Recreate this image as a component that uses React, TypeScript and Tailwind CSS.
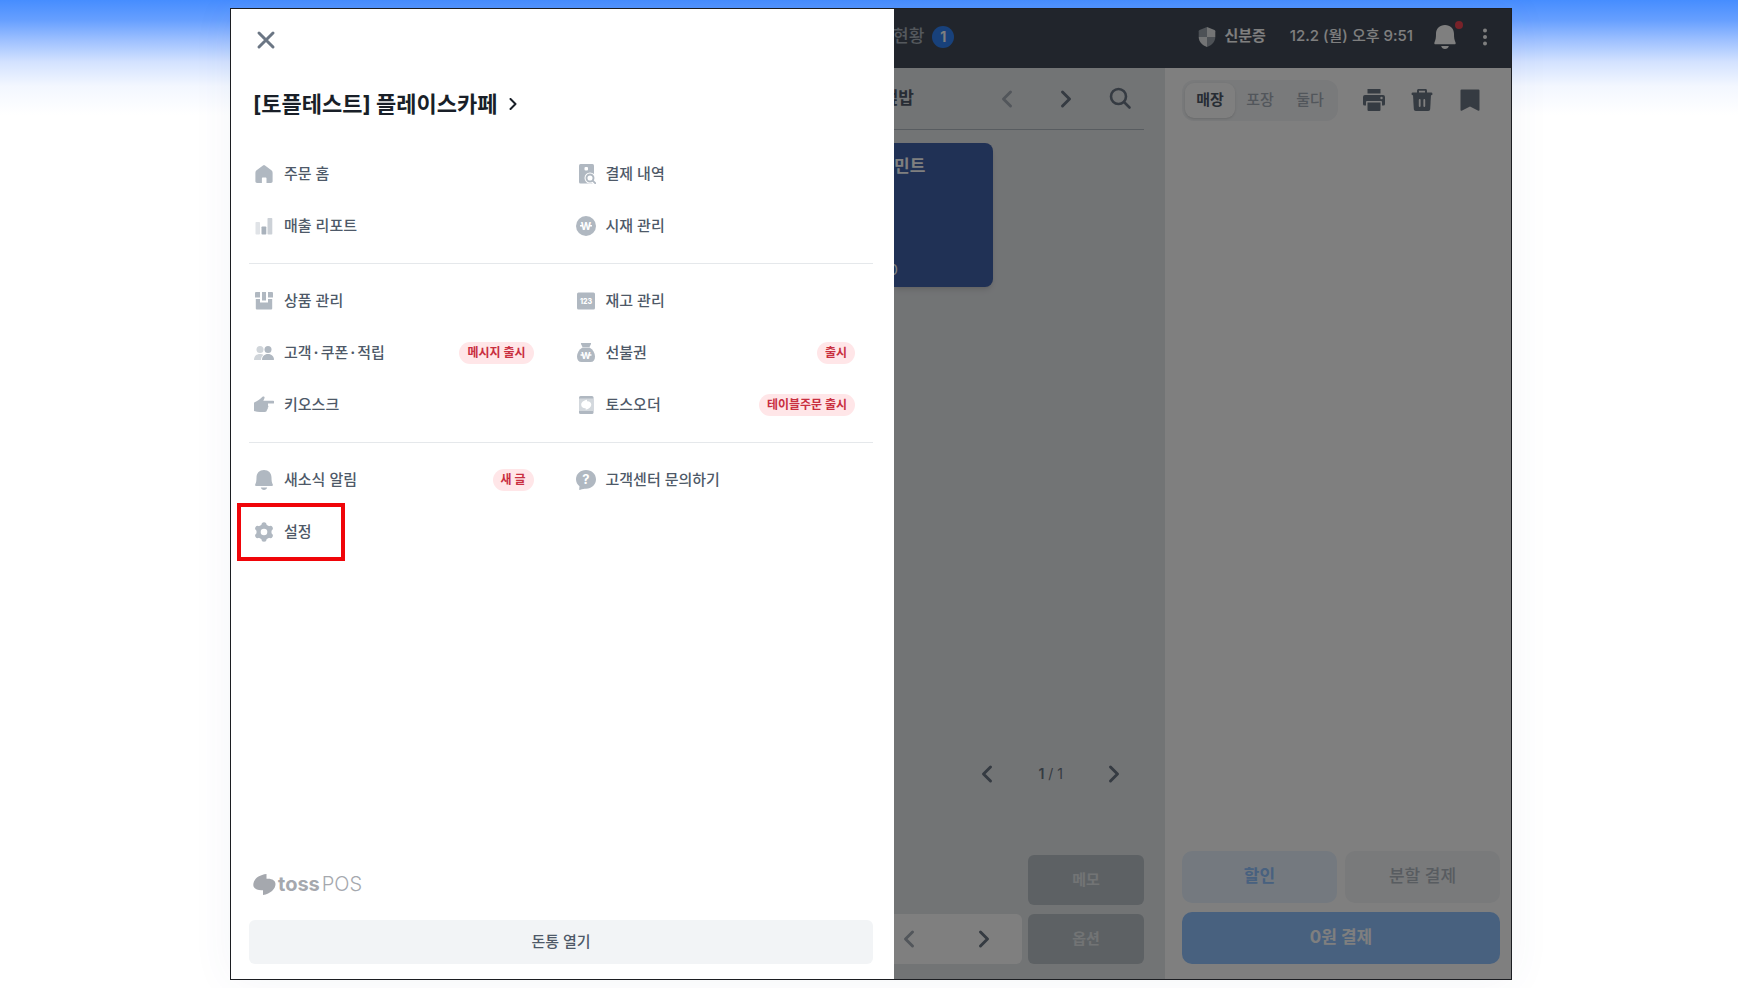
import React from 'react'

interface MenuItem {
  label: string
  icon: React.ReactNode
  badge?: string
  highlighted?: boolean
}

const HomeIcon = () => (
  <svg viewBox="0 0 20 20" className="size-5" fill="#b0b8c1">
    <path d="M9 1.4a1.6 1.6 0 0 1 2 0l6.4 4.9c.8.6 1.2 1.4 1.2 2.4v8.6c0 1-.7 1.7-1.7 1.7h-4.4v-4.6c0-.6-.4-1-1-1H8.900c-.6 0-1 .4-1 1V19H3.100c-1 0-1.700-.7-1.700-1.700V8.700c0-1 .4-1.800 1.200-2.400z" />
  </svg>
)

const ReportIcon = () => (
  <svg viewBox="0 0 20 20" className="size-5">
    <rect x="1.500" y="6" width="4.500" height="12.500" rx=".8" fill="#e0e3e7" />
    <rect x="7.500" y="10.500" width="4.800" height="8" rx=".8" fill="#a9b2bc" />
    <rect x="13.500" y="2" width="4.800" height="16.500" rx=".8" fill="#ccd1d7" />
  </svg>
)

const ReceiptIcon = () => (
  <svg viewBox="0 0 20 20" className="size-5">
    <rect x="3" y="0" width="15" height="19.500" rx="1.500" fill="#b0b8c1" />
    <rect x="8.500" y="3" width="3.500" height="3.500" rx="1" fill="#fff" />
    <circle cx="14" cy="14" r="5.500" fill="#fff" />
    <path d="m16 16 4 4" stroke="#fff" strokeWidth="4.500" />
    <circle cx="14" cy="14" r="3.500" fill="none" stroke="#b0b8c1" strokeWidth="1.900" />
    <path d="m16.700 16.700 2.500 2.500" stroke="#b0b8c1" strokeWidth="1.900" strokeLinecap="round" />
  </svg>
)

const WonIcon = () => (
  <svg viewBox="0 0 20 20" className="size-5">
    <circle cx="10" cy="10" r="10" fill="#b0b8c1" />
    <text x="10" y="13.500" textAnchor="middle" fontSize="10" fontWeight="700" fill="#fff">W</text>
    <path d="M4 9.700h3M13 9.700h3" stroke="#fff" strokeWidth="1.500" />
  </svg>
)

const BoxIcon = () => (
  <svg viewBox="0 0 20 20" className="size-5" fill="#b0b8c1">
    <path d="M2 1h4v5.500H1V2a1 1 0 0 1 1-1zM14 1h4a1 1 0 0 1 1 1v4.500h-5zM8 1h4v8.500H8z" />
    <path d="M1.800 8H6v3.500h8V8h4.200v9.500a1 1 0 0 1-1 1H2.800a1 1 0 0 1-1-1z" />
  </svg>
)

const StockIcon = () => (
  <svg viewBox="0 0 20 20" className="size-5">
    <rect x="1" y="1.500" width="18" height="17" rx="1.500" fill="#b0b8c1" />
    <text x="10" y="12.500" textAnchor="middle" fontSize="7" fontWeight="800" fill="#fff">123</text>
  </svg>
)

const PeopleIcon = () => (
  <svg viewBox="0 0 20 20" className="size-5">
    <circle cx="6" cy="6.500" r="3.500" fill="#d0d5da" />
    <path d="M0 17c0-4 2.500-6 6-6 1.500 0 2.500.4 3.500 1-2 1.300-2.500 3-2.500 5z" fill="#d0d5da" />
    <circle cx="14" cy="6.500" r="3.500" fill="#b0b8c1" />
    <path d="M8 16.500c0-3 2.300-5.500 6-5.500s6 2.500 6 5.500c0 .3-.2.500-.5.500h-11a.5.500 0 0 1-.5-.5z" fill="#b0b8c1" />
  </svg>
)

const PouchIcon = () => (
  <svg viewBox="0 0 20 20" className="size-5">
    <path d="M5.500 0h9c.5 0 .7.500.5.900L13.500 4h-7L5 .9C4.800.5 5 0 5.500 0z" fill="#b0b8c1" />
    <path d="M6.500 4.500h7C17 6.500 19 10 19 13.500c0 3.500-1.500 5.500-4.500 5.500h-9C2.500 19 1 17 1 13.500 1 10 3 6.500 6.500 4.500z" fill="#b0b8c1" />
    <text x="10" y="15.500" textAnchor="middle" fontSize="9" fontWeight="700" fill="#fff">W</text>
    <path d="M4.500 12h3M12.500 12h3" stroke="#fff" strokeWidth="1.400" />
  </svg>
)

const HandIcon = () => (
  <svg viewBox="0 0 20 20" className="size-5" fill="#b0b8c1">
    <path d="M0 7.500C3 6.500 5.500 4.500 8.500 1.800c1-.9 2.300-.2 2.100 1-.2 1-.8 2-1.300 2.900h9.700a1.400 1.400 0 0 1 0 2.800H14v2c.6.500.6 1.800-.3 2.200.3.900 0 1.800-.8 2.100.1 1.300-.8 2.200-2 2.200H6c-2 0-4-.5-6-1z" />
  </svg>
)

const OrderIcon = () => (
  <svg viewBox="0 0 20 20" className="size-5">
    <rect x="3" y="1" width="14.500" height="18" rx="1.500" fill="#b0b8c1" />
    <rect x="3" y="3.500" width="14.500" height="12.500" fill="#d3d8dd" />
    <path d="M11 4.800v1.400c2.600-.2 4.300 1.500 4.300 3.600 0 2.200-2.300 4.200-5.600 4.900v-1.400c-2.700.2-4.500-1.400-4.500-3.500 0-2.500 2.400-4.500 5.800-5z" fill="#fff" />
  </svg>
)

const BellIcon = ({ className = 'size-5', fill = '#b0b8c1' }: { className?: string; fill?: string }) => (
  <svg viewBox="0 0 20 20" className={className} fill={fill}>
    <path d="M10 0c4.500 0 7.500 3 7.500 7.500 0 3 .3 5 1.300 7 .3.700 0 1.500-.8 1.500H2c-.8 0-1.100-.8-.8-1.500 1-2 1.300-4 1.300-7C2.500 3 5.500 0 10 0zM6.800 17.500h6.400c-.4 1.600-1.600 2.500-3.200 2.500s-2.800-.9-3.200-2.500z" />
  </svg>
)

const HelpIcon = () => (
  <svg viewBox="0 0 20 20" className="size-5">
    <path d="M10 0c5.700 0 10 4 10 9.300s-4.300 9.400-10 9.400c-1.700 0-3 0-6.200 1.200-.4.100-.7-.1-.6-.6l.3-3C1.300 14.500 0 12.200 0 9.300 0 4 4.300 0 10 0z" fill="#b0b8c1" />
    <text x="10" y="14" textAnchor="middle" fontSize="13" fontWeight="700" fill="#fff">?</text>
  </svg>
)

const GearIcon = () => (
  <svg viewBox="0 0 20 20" className="size-5">
    <path d="M10 2.500 16.500 6.200v7.600L10 17.500l-6.500-3.700V6.200z" fill="#b0b8c1" stroke="#b0b8c1" strokeWidth="2" strokeLinejoin="round" />
    <g stroke="#b0b8c1" strokeWidth="5" strokeLinecap="round">
      <path d="M10 2.700v14.600M3.700 6.300l12.600 7.400M16.300 6.300 3.700 13.700" />
    </g>
    <circle cx="10" cy="10" r="3.300" fill="#fff" />
  </svg>
)

const Chevron = ({ direction, color = '#6b7684' }: { direction: 'left' | 'right'; color?: string }) => (
  <svg viewBox="0 0 20 20" className="size-5" fill="none" stroke={color} strokeWidth="3" strokeLinecap="round" strokeLinejoin="round">
    <path d={direction === 'left' ? 'M13.500 3 6.500 10l7 7' : 'm6.500 3 7 7-7 7'} />
  </svg>
)

const menuGroups: MenuItem[][] = [
  [
    { label: '주문 홈', icon: <HomeIcon /> },
    { label: '결제 내역', icon: <ReceiptIcon /> },
    { label: '매출 리포트', icon: <ReportIcon /> },
    { label: '시재 관리', icon: <WonIcon /> }
  ],
  [
    { label: '상품 관리', icon: <BoxIcon /> },
    { label: '재고 관리', icon: <StockIcon /> },
    { label: '고객·쿠폰·적립', icon: <PeopleIcon />, badge: '메시지 출시' },
    { label: '선불권', icon: <PouchIcon />, badge: '출시' },
    { label: '키오스크', icon: <HandIcon /> },
    { label: '토스오더', icon: <OrderIcon />, badge: '테이블주문 출시' }
  ],
  [
    { label: '새소식 알림', icon: <BellIcon />, badge: '새 글' },
    { label: '고객센터 문의하기', icon: <HelpIcon /> },
    { label: '설정', icon: <GearIcon />, highlighted: true }
  ]
]

const MenuRow = ({ item }: { item: MenuItem }) => (
  <li className="relative">
    <button type="button" className="flex h-[52px] w-full items-center text-left">
      {item.icon}
      <span className="ml-[10px] flex-1 text-[15px] font-medium text-[#4e5968]">
        {item.label.split('·').map((part, i) => (
          <React.Fragment key={part}>
            {i > 0 && <span className="mx-[2px] font-bold">·</span>}
            {part}
          </React.Fragment>
        ))}
      </span>
      {item.badge && (
        <span className="rounded-full bg-[#ffe6e8] px-2 text-xs leading-[22px] font-bold text-[#c92f40]">
          {item.badge}
        </span>
      )}
    </button>
    {item.highlighted && (
      <span className="pointer-events-none absolute -inset-y-[3px] -left-[17px] w-[108px] border-4 border-[#f00509]" />
    )}
  </li>
)

const Drawer = () => (
  <nav className="flex w-[663px] shrink-0 flex-col bg-white pr-[21px] pl-[18px]">
    <button type="button" aria-label="닫기" className="mt-[19px] ml-[5px] flex size-6 items-center justify-center">
      <svg viewBox="0 0 24 24" className="size-6" fill="none" stroke="#6b7684" strokeWidth="3" strokeLinecap="round">
        <path d="m5 5 14 14M19 5 5 19" />
      </svg>
    </button>

    <button type="button" className="mt-[36px] ml-1 flex h-8 items-center gap-[10px] self-start text-[22px] font-bold text-[#191f28]">
      [토플테스트] 플레이스카페
      <svg viewBox="0 0 12 12" className="size-3" fill="none" stroke="#191f28" strokeWidth="2" strokeLinecap="round" strokeLinejoin="round">
        <path d="m3.500 1 5 5-5 5" />
      </svg>
    </button>

    <div className="mt-7 divide-y divide-[#e5e8eb]">
      {menuGroups.map((group, i) => (
        <ul key={i} className="grid grid-cols-2 gap-x-[42px] py-[11px] pr-[18px] pl-[5px] first:pt-0">
          {group.map(item => (
            <MenuRow key={item.label} item={item} />
          ))}
        </ul>
      ))}
    </div>

    <div className="mt-auto ml-1 flex h-6 items-center text-xl text-[#a5a8ae]">
      <svg viewBox="0 0 23 21" className="mr-[2px] h-[21px] w-[23px]" fill="#a5a8ae">
        <path d="M13.500 0v4.800C19 4.300 22.500 6.500 22.500 10c0 5-5 9.800-12.500 11v-4.800C4.500 16.700.3 14.500.3 11 .3 5.500 5.500.8 13.500 0z" />
      </svg>
      <span className="font-bold">toss</span>
      <span className="ml-[2px] font-light">POS</span>
    </div>

    <button type="button" className="mt-6 mb-[15px] h-11 rounded-md bg-[#f2f4f6] text-[15px] font-medium text-[#4e5968]">
      돈통 열기
    </button>
  </nav>
)

const TopBar = () => (
  <header className="flex h-[59px] items-center bg-[#424b58] pr-[18px] pb-1 text-white">
    <span className="-ml-px text-[17px] font-medium whitespace-nowrap text-[#a8b0ba]">현황</span>
    <span className="ml-2 flex size-[22px] items-center justify-center rounded-full bg-[#3182f6] text-sm font-bold">1</span>

    <button type="button" className="ml-auto flex items-center gap-2 text-[15px] font-bold">
      <svg viewBox="0 0 18 20" className="h-5 w-[18px]">
        <path d="M9 0 1.500 3C1 3.200.7 3.600.7 4.200V10H9z" fill="#9aa2ac" />
        <path d="m9 0 7.500 3c.5.200.8.600.8 1.200V10H9z" fill="#e6e8ea" />
        <path d="M.7 10C.8 15 4.500 18.500 9 20V10z" fill="#e6e8ea" />
        <path d="M17.300 10C17.200 15 13.500 18.500 9 20V10z" fill="#9aa2ac" />
      </svg>
      신분증
    </button>
    <span className="ml-6 text-[15px] font-medium whitespace-nowrap">12.2 (월) 오후 9:51</span>
    <button type="button" aria-label="알림" className="relative ml-5">
      <BellIcon className="size-6" fill="#fff" />
      <span className="absolute -top-1 -right-1.5 size-2 rounded-full bg-[#f04452]" />
    </button>
    <button type="button" aria-label="더보기" className="ml-5">
      <svg viewBox="0 0 16 20" className="h-5 w-4" fill="#fff">
        <circle cx="8" cy="3.500" r="2" />
        <circle cx="8" cy="10" r="2" />
        <circle cx="8" cy="16.500" r="2" />
      </svg>
    </button>
  </header>
)

const ProductPanel = () => (
  <div className="flex min-w-0 flex-1 flex-col bg-[#e5e8eb] pr-[21px] pb-[15px]">
    <div className="flex h-[62px] items-center border-b border-[#b0b8c1]">
      <span className="flex w-5 justify-end overflow-hidden text-[17px] font-bold whitespace-nowrap text-[#4e5968]">덮밥</span>
      <button type="button" aria-label="이전 카테고리" className="ml-auto"><Chevron direction="left" color="#a5adb6" /></button>
      <button type="button" aria-label="다음 카테고리" className="ml-[39px]"><Chevron direction="right" /></button>
      <button type="button" aria-label="검색" className="mr-3 ml-8">
        <svg viewBox="0 0 24 24" className="size-6" fill="none" stroke="#6b7684" strokeWidth="2.600" strokeLinecap="round">
          <circle cx="10.500" cy="9.500" r="7.500" />
          <path d="m16 15 5.500 5.500" />
        </svg>
      </button>
    </div>

    <button type="button" className="mt-[13px] flex h-[144px] w-[99px] flex-col justify-between rounded-r-lg bg-[#4062aa] pt-[11px] pb-[6px] text-left text-white shadow-md">
      <span className="text-[17px] font-bold">민트</span>
      <span className="flex w-1 justify-end overflow-hidden text-[15px]">0</span>
    </button>

    <div className="mt-auto mr-5 flex items-center gap-[41px] self-end text-sm text-[#6b7684]">
      <button type="button" aria-label="이전 페이지"><Chevron direction="left" /></button>
      <span><b className="font-semibold">1</b> / 1</span>
      <button type="button" aria-label="다음 페이지"><Chevron direction="right" /></button>
    </div>

    <div className="mt-[71px] flex items-end gap-[6px]">
      <div className="flex h-[50px] flex-1 items-center justify-between rounded-r-md bg-white pr-7 pl-[5px]">
        <button type="button" aria-label="이전"><Chevron direction="left" color="#a5adb6" /></button>
        <button type="button" aria-label="다음"><Chevron direction="right" /></button>
      </div>
      <div className="flex w-[116px] flex-col gap-[9px] text-[15px] font-bold text-[#e5e8eb]">
        <button type="button" className="h-[50px] rounded-md bg-[#bac3c8]">메모</button>
        <button type="button" className="h-[50px] rounded-md bg-[#bac3c8]">옵션</button>
      </div>
    </div>
  </div>
)

const OrderPanel = () => (
  <div className="flex w-[346px] shrink-0 flex-col bg-white pt-3 pr-[11px] pb-[15px] pl-[17px]">
    <div className="flex items-center">
      <div className="flex rounded-xl bg-[#f2f4f6] p-[3px] text-[15px] font-medium text-[#a5adb6]">
        <button type="button" className="h-[35px] w-[50px] rounded-[9px] bg-white font-bold text-[#4e5968] shadow-sm">매장</button>
        <button type="button" className="h-[35px] w-[50px]">포장</button>
        <button type="button" className="h-[35px] w-[50px]">둘다</button>
      </div>
      <button type="button" aria-label="인쇄" className="ml-6">
        <svg viewBox="0 0 24 24" className="size-6" fill="#6b7684">
          <path d="M5.500 0h13v4.500h-13zM3 6h18a2 2 0 0 1 2 2v7a1.500 1.500 0 0 1-1.500 1.500H20V13a1 1 0 0 0-1-1H5a1 1 0 0 0-1 1v3.500H2.500A1.500 1.500 0 0 1 1 15V8a2 2 0 0 1 2-2z" />
          <path d="M5.500 13.500h13V21a1 1 0 0 1-1 1h-11a1 1 0 0 1-1-1z" />
          <circle cx="19.500" cy="9" r="1.200" fill="#fff" />
        </svg>
      </button>
      <button type="button" aria-label="삭제" className="ml-6">
        <svg viewBox="0 0 24 24" className="size-6" fill="#6b7684">
          <path d="M8 4V1.800C8 1.200 8.500.7 9.100.7h5.800c.6 0 1.100.5 1.100 1.100V4" fill="none" stroke="#6b7684" strokeWidth="2" />
          <rect x="1.500" y="3.500" width="21" height="2.800" rx="1.400" />
          <path d="M3 6h18l-.8 14c-.1 1.200-.8 2-2 2H5.800c-1.200 0-1.900-.8-2-2z" />
          <path d="M9.700 11v6M14.300 11v6" stroke="#fff" strokeWidth="1.800" strokeLinecap="round" />
        </svg>
      </button>
      <button type="button" aria-label="보관" className="ml-6">
        <svg viewBox="0 0 24 24" className="size-6" fill="#6b7684">
          <path d="M3.500.5h17a1 1 0 0 1 1 1V21c0 .7-.6 1-1.200.7L12 17.500l-8.300 4.200c-.6.300-1.200 0-1.200-.7V1.500a1 1 0 0 1 1-1z" />
        </svg>
      </button>
    </div>

    <div className="mt-auto grid grid-cols-2 gap-x-2 gap-y-[9px] text-[17px] font-bold">
      <button type="button" className="h-[52px] rounded-[10px] bg-[#e8f3ff] text-[#90c2ff]">할인</button>
      <button type="button" className="h-[52px] rounded-[10px] bg-[#f2f4f6] font-medium text-[#b0b8c1]">분할 결제</button>
      <button type="button" className="col-span-2 h-[52px] rounded-[10px] bg-[#90c2ff] text-white">0원 결제</button>
    </div>
  </div>
)

const App = () => (
  <div className="flex min-h-screen bg-white bg-[linear-gradient(to_bottom,#468dff_0px,#669fff_20px,#9dc0ff_40px,#d3e2ff_62px,#f3f7ff_86px,#ffffff_115px)] pt-2 pr-[226px] pb-2 pl-[230px] font-['Inter','Noto_Sans_CJK_KR',sans-serif]">
    <div className="flex min-w-0 flex-1 border border-[#1c1e22] shadow-[0_0_40px_rgba(60,90,130,0.06)]">
      <Drawer />
      <main className="relative flex min-w-0 flex-1 flex-col overflow-hidden">
        <TopBar />
        <div className="flex flex-1">
          <ProductPanel />
          <OrderPanel />
        </div>
        {/* dimmed while the drawer is open */}
        <div className="absolute inset-0 bg-black/50" />
      </main>
    </div>
  </div>
)

export default App
